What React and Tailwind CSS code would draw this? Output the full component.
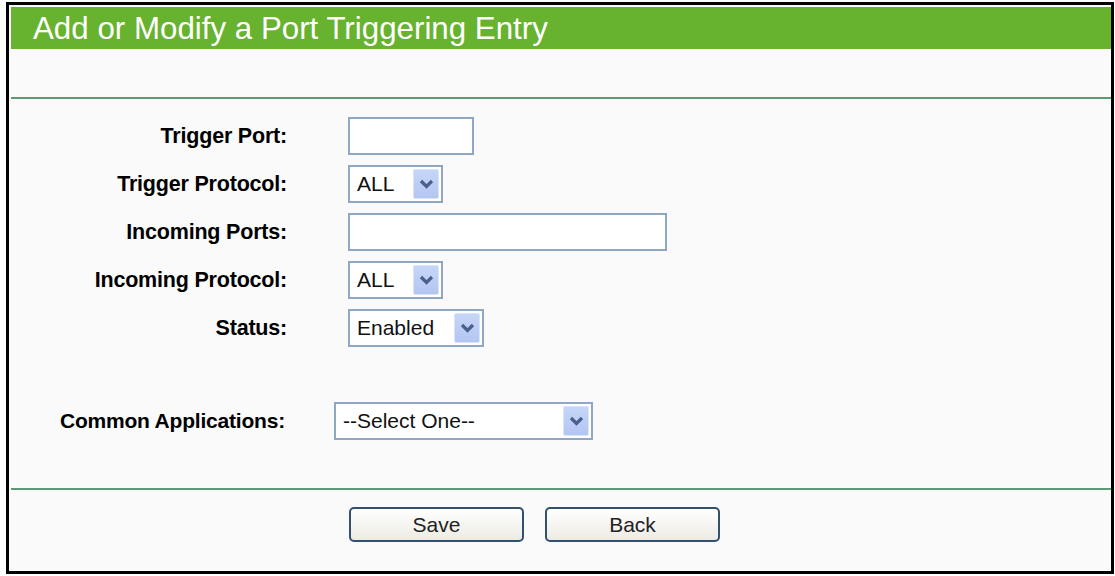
import React from "react";

const font = { fontFamily: '"Liberation Sans", Arial, sans-serif' };

function Chevron() {
  return (
    <svg width="15" height="10" viewBox="0 0 15 10">
      <path d="M2 2 L7.5 7.5 L13 2" fill="none" stroke="#4a5f8c" strokeWidth="3.2" strokeLinejoin="miter" />
    </svg>
  );
}

function Select({ value, width }) {
  return (
    <div
      className="h-[38px] border-2 border-[#8fa6c4] bg-white flex items-center justify-between pl-[7px] pr-[2px]"
      style={{ width }}
    >
      <span className="text-[21px] text-[#111]">{value}</span>
      <span className="w-[26px] h-[30px] rounded-[2px] bg-gradient-to-b from-[#c6d6f7] to-[#b3c6f2] border border-[#d9e4fb] flex items-center justify-center">
        <Chevron />
      </span>
    </div>
  );
}

function TextBox({ width }) {
  return <div className="h-[38px] border-2 border-[#8fa6c4] bg-white" style={{ width }} />;
}

function Row({ label, children }) {
  return (
    <div className="flex items-center h-[38px]">
      <div className="w-[276px] text-right text-[21.5px] font-bold text-black tracking-[-0.2px]">{label}</div>
      <div className="ml-[61px]">{children}</div>
    </div>
  );
}

function Button({ children }) {
  return (
    <button className="w-[175px] h-[35px] rounded-[5px] border-2 border-[#34506f] bg-gradient-to-b from-white to-[#ecebe4] text-[21px] text-[#222]">
      {children}
    </button>
  );
}

export default function App() {
  return (
    <div className="w-[1115px] h-[576px] bg-white pt-[2px] pl-[6px]" style={font}>
      <div className="w-[1108px] h-[572px] border-[3px] border-black bg-[#fafafa] pt-[2px] pl-[2px]">
        <div className="h-[42px] bg-[#67b22e] flex items-center pl-[22px] pt-[2px]">
          <h1 className="text-[31.3px] text-white leading-none">Add or Modify a Port Triggering Entry</h1>
        </div>
        <div className="h-[48px]" />
        <div className="h-[2px] bg-[#5b9a76]" />

        <div className="flex flex-col gap-[10px] mt-[18px]">
          <Row label="Trigger Port:">
            <TextBox width={126} />
          </Row>
          <Row label="Trigger Protocol:">
            <Select value="ALL" width={95} />
          </Row>
          <Row label="Incoming Ports:">
            <TextBox width={319} />
          </Row>
          <Row label="Incoming Protocol:">
            <Select value="ALL" width={95} />
          </Row>
          <Row label="Status:">
            <Select value="Enabled" width={136} />
          </Row>
        </div>

        <div className="flex items-center h-[38px] mt-[55px]">
          <div className="w-[274px] text-right text-[21px] font-bold text-black tracking-[-0.2px]">Common Applications:</div>
          <div className="ml-[49px]">
            <Select value="--Select One--" width={259} />
          </div>
        </div>

        <div className="h-[2px] bg-[#5b9a76] mt-[48px]" />

        <div className="flex gap-[21px] pl-[338px] mt-[17px]">
          <Button>Save</Button>
          <Button>Back</Button>
        </div>
      </div>
    </div>
  );
}
